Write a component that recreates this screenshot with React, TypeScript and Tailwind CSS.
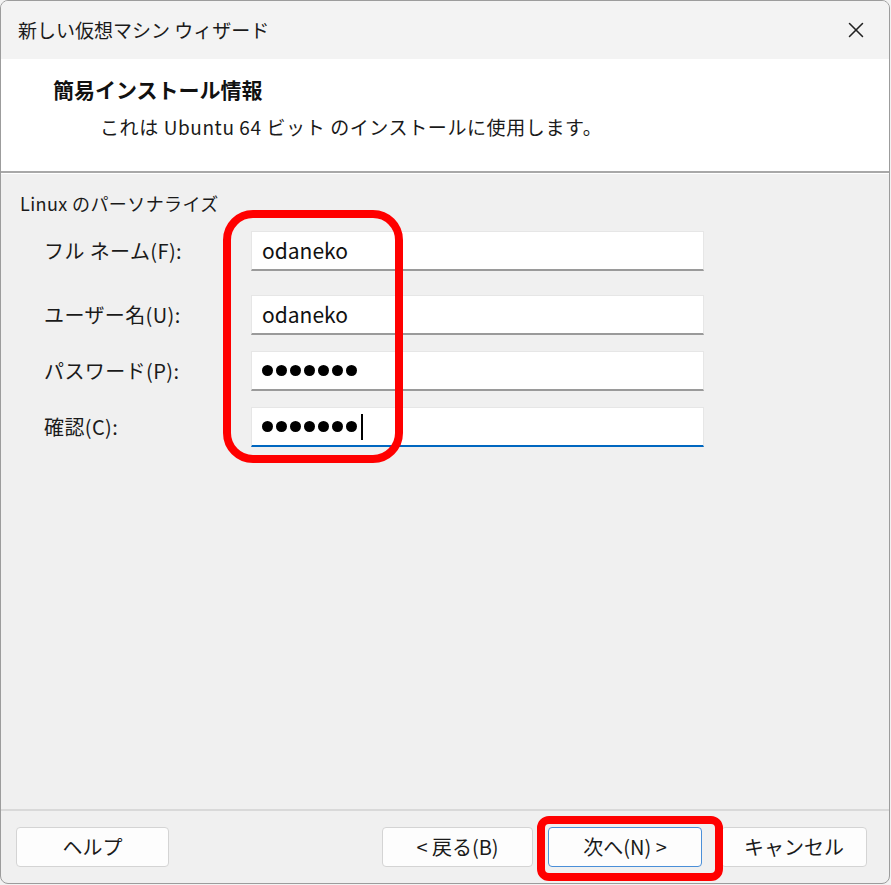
import { X } from "lucide-react"

const jp = { fontFamily: '"Noto Sans CJK JP", "Noto Sans", sans-serif' }

function Field({ label, value, password, focused, top }: { label: string; value: string; password?: boolean; focused?: boolean; top: string }) {
  return (
    <div className={`flex items-center ${top}`}>
      <div className="w-[231px] pl-[24px] text-[20px] text-[#1a1a1a] leading-none tracking-[0.4px]">{label}</div>
      <div
        className={`relative flex items-center w-[453px] h-[40px] bg-white border border-[#e6e6e6] border-b-2 pl-[10px] ${
          focused ? "border-b-[#0067c0]" : "border-b-[#9a9a9a]"
        }`}
      >
        {password ? (
          <span className="flex items-center gap-[3px]">
            {Array.from({ length: 7 }).map((_, i) => (
              <span key={i} className="block w-[11px] h-[11px] rounded-full bg-black" />
            ))}
            {focused && <span className="block w-[2px] h-[26px] bg-black ml-[1px]" />}
          </span>
        ) : (
          <span className="text-[21px] text-[#111] leading-none" style={jp}>{value}</span>
        )}
      </div>
    </div>
  )
}

function Btn({ children, primary, className = "" }: { children: React.ReactNode; primary?: boolean; className?: string }) {
  return (
    <div
      className={`flex items-center justify-center h-[40px] rounded-[4px] bg-[#fdfdfd] text-[20px] text-[#1a1a1a] border ${
        primary ? "border-[#4a8fd8]" : "border-[#d4d4d4]"
      } ${className}`}
    >
      {children}
    </div>
  )
}

export default function App() {
  return (
    <div className="w-[891px] h-[885px] bg-[#f2f2f2] relative" style={jp}>
      <div className="w-[890px] h-[884px] flex flex-col border border-[#9c9c9c] rounded-[8px] overflow-hidden bg-[#f0f0f0]">
        {/* Title bar */}
        <div className="h-[58px] shrink-0 bg-[#f3f3f3] flex items-center justify-between pl-[17px] pr-[20px]">
          <span className="text-[19px] text-[#1a1a1a]">新しい仮想マシン ウィザード</span>
          <X className="w-[26px] h-[26px] text-[#222]" strokeWidth={1.4} />
        </div>

        {/* Header */}
        <div className="h-[114px] shrink-0 bg-white border-b-2 border-[#a8a8a8] pl-[52px] pt-[16px]">
          <div className="text-[21px] font-bold text-[#111] leading-[28px]">簡易インストール情報</div>
          <div className="mt-[11px] pl-[47px] text-[19px] text-[#1a1a1a] leading-[26px] tracking-[0.6px]">
            これは Ubuntu 64 ビット のインストールに使用します。
          </div>
        </div>

        {/* Body */}
        <div className="flex-1 border-t border-white pl-[19px] pt-[16px]">
          <div className="text-[18px] text-[#1a1a1a] leading-[26px] tracking-[0.4px]">Linux のパーソナライズ</div>
          <div className="flex flex-col">
            <Field label="フル ネーム(F):" value="odaneko" top="mt-[15px]" />
            <Field label="ユーザー名(U):" value="odaneko" top="mt-[24px]" />
            <Field label="パスワード(P):" value="" password top="mt-[16px]" />
            <Field label="確認(C):" value="" password focused top="mt-[16px]" />
          </div>
        </div>

        {/* Footer */}
        <div className="h-[74px] shrink-0 border-t-2 border-[#d9d9d9] flex items-start pt-[16px] pl-[15px] pr-[22px]">
          <Btn className="w-[153px]">ヘルプ</Btn>
          <div className="flex-1" />
          <Btn className="w-[151px]">&lt; 戻る(B)</Btn>
          <Btn primary className="w-[154px] ml-[15px]">次へ(N) &gt;</Btn>
          <Btn className="w-[146px] ml-[19px]">キャンセル</Btn>
        </div>
      </div>

      {/* Red annotation boxes */}
      <div className="absolute left-[223px] top-[210px] w-[180px] h-[253px] border-[8px] border-[#ff0000] rounded-[30px]" />
      <div className="absolute left-[537px] top-[816px] w-[186px] h-[65px] border-[8px] border-[#ff0000] rounded-[12px]" />
    </div>
  )
}
